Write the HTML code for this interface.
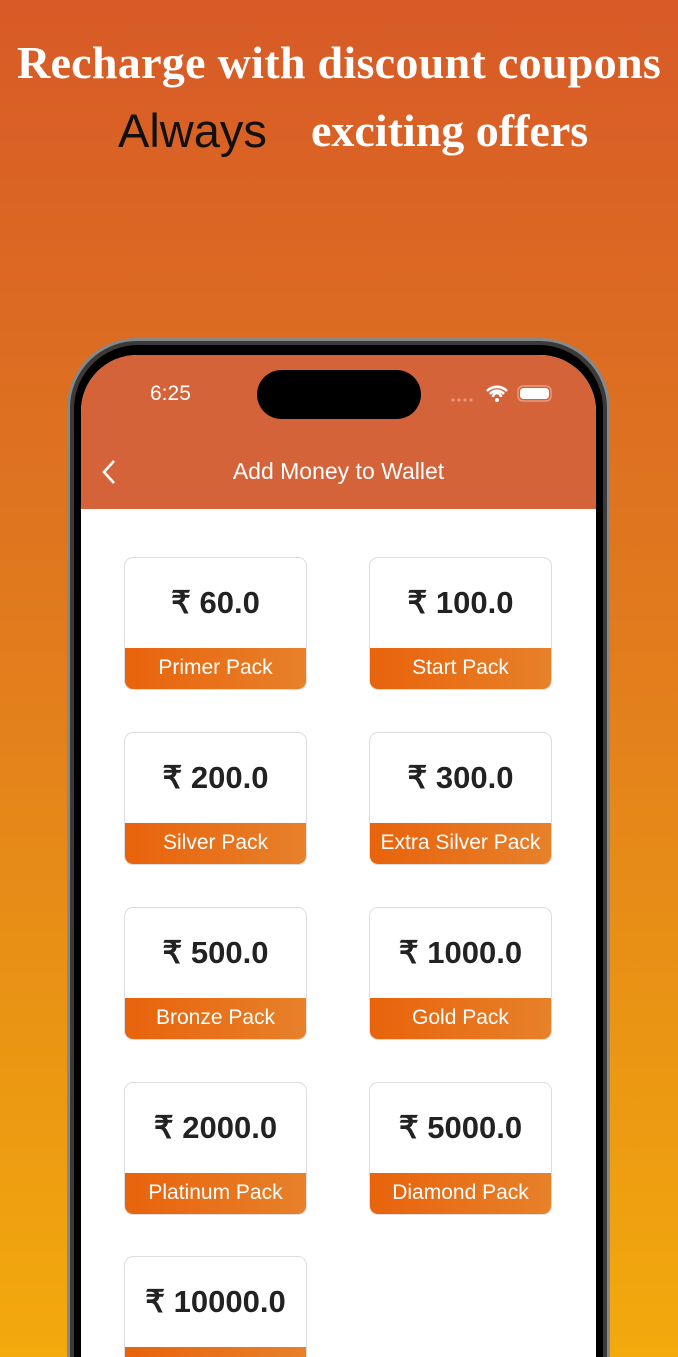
<!DOCTYPE html>
<html><head><meta charset="utf-8"><style>
*{margin:0;padding:0;box-sizing:border-box}
html,body{width:678px;height:1357px;overflow:hidden}
body{position:relative;background:linear-gradient(180deg,#d85a27 0%,#e07a1e 45%,#f2aa0c 100%);font-family:"Liberation Sans",sans-serif}
.t1{position:absolute;top:36px;left:0;width:678px;text-align:center;color:#fff;font-family:"Liberation Serif",serif;font-weight:bold;font-size:46px;letter-spacing:0.3px;white-space:nowrap}
.t2{position:absolute;top:103px;left:118px;font-size:47px;color:#111}
.t3{position:absolute;top:104px;left:311px;font-family:"Liberation Serif",serif;font-weight:bold;font-size:46px;color:#fff}
.frame{position:absolute;left:67px;top:338px;width:543px;height:1019px;border-radius:70px 70px 0 0;background:#3a3a3a;border:3px solid #888;border-bottom:none}
.bezel{position:absolute;left:74px;top:345px;width:529px;height:1012px;border-radius:64px 64px 0 0;background:#000}
.screen{position:absolute;left:81px;top:355px;width:515px;height:1002px;border-radius:56px 56px 0 0;background:#fff;overflow:hidden}
.hdr{position:absolute;left:0;top:0;width:515px;height:154px;background:#d5633a}
.island{position:absolute;left:176px;top:15px;width:164px;height:49px;border-radius:25px;background:#000}
.time{position:absolute;left:69px;top:27px;color:#fff;font-size:21px}
.title{position:absolute;top:103px;width:515px;text-align:center;color:#fff;font-size:23px}
.card{position:absolute;width:183px;height:133px;border:1.5px solid #ddd;border-radius:9px;overflow:hidden;background:#fff}
.amt{position:absolute;top:27px;width:100%;text-align:center;font-size:31px;font-weight:bold;color:#222}
.lab{position:absolute;top:90px;height:41px;width:100%;background:linear-gradient(90deg,#e8630c,#e7812a);color:#fff;text-align:center;font-size:21px;line-height:40px}
</style></head><body>
<div class="t1">Recharge with discount coupons</div>
<div class="t2">Always</div>
<div class="t3">exciting offers</div>
<div class="frame"></div>
<div class="bezel"></div>
<div class="screen">
<div class="hdr"></div>
<div class="island"></div>
<div class="time">6:25</div>
<svg style="position:absolute;left:370px;top:28px" width="110" height="20"><g fill="#e89b7c"><circle cx="2" cy="17" r="1.6"/><circle cx="8" cy="17" r="1.6"/><circle cx="14" cy="17" r="1.6"/><circle cx="20" cy="17" r="1.6"/></g><path d="M36 8a14 14 0 0 1 20 0M39 11a9 9 0 0 1 14 0M42 14a4 4 0 0 1 8 0" stroke="#fff" stroke-width="2.6" fill="none"/><circle cx="46" cy="17" r="2" fill="#fff"/><rect x="67" y="3" width="33" height="15" rx="5" fill="none" stroke="#e89b7c" stroke-width="1.5"/><rect x="69" y="5" width="29" height="11" rx="3.5" fill="#fff"/></svg>
<svg style="position:absolute;left:20px;top:104px" width="16" height="26"><path d="M13 2L3 13l10 11" stroke="#fff" stroke-width="2.6" fill="none"/></svg>
<div class="title">Add Money to Wallet</div>
</div>
<div class="card" style="left:124px;top:557px"><div class="amt">₹ 60.0</div><div class="lab">Primer Pack</div></div>
<div class="card" style="left:369px;top:557px"><div class="amt">₹ 100.0</div><div class="lab">Start Pack</div></div>
<div class="card" style="left:124px;top:732px"><div class="amt">₹ 200.0</div><div class="lab">Silver Pack</div></div>
<div class="card" style="left:369px;top:732px"><div class="amt">₹ 300.0</div><div class="lab">Extra Silver Pack</div></div>
<div class="card" style="left:124px;top:907px"><div class="amt">₹ 500.0</div><div class="lab">Bronze Pack</div></div>
<div class="card" style="left:369px;top:907px"><div class="amt">₹ 1000.0</div><div class="lab">Gold Pack</div></div>
<div class="card" style="left:124px;top:1082px"><div class="amt">₹ 2000.0</div><div class="lab">Platinum Pack</div></div>
<div class="card" style="left:369px;top:1082px"><div class="amt">₹ 5000.0</div><div class="lab">Diamond Pack</div></div>
<div class="card" style="left:124px;top:1256px;height:101px;border-bottom:none;border-radius:9px 9px 0 0"><div class="amt">₹ 10000.0</div><div class="lab">Titanium Pack</div></div>
</body></html>
